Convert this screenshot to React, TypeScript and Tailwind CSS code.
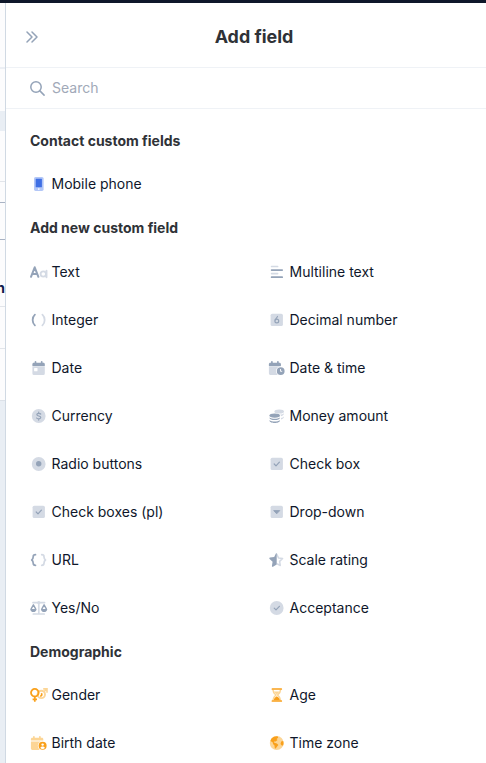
import type { ReactNode } from 'react';

const DARK = '#94a3b8';
const LIGHT = '#d4dae4';

function Icon({ children }: { children: ReactNode }) {
  return (
    <svg className="h-3.5 w-[18px] shrink-0 overflow-visible" viewBox="0 0 18 14" fill="none">
      {children}
    </svg>
  );
}

const TextIcon = () => (
  <Icon>
    <path d="M1 11.8 4.7 2.3 8.4 11.8M2.2 8.9h5" stroke={DARK} strokeWidth="2" strokeLinecap="round" strokeLinejoin="round" />
    <circle cx="13.3" cy="9" r="2.7" stroke={LIGHT} strokeWidth="1.8" />
    <path d="M16.5 5.8v6.5" stroke={LIGHT} strokeWidth="1.9" strokeLinecap="round" />
  </Icon>
);

const MultilineIcon = () => (
  <Icon>
    <g strokeWidth="1.7" strokeLinecap="round">
      <path d="M3.6 1.5h6M3.6 8.6h6" stroke={LIGHT} />
      <path d="M3.6 5.1h10.6M3.6 12.2h10.6" stroke={DARK} />
    </g>
  </Icon>
);

const IntegerIcon = () => (
  <Icon>
    <g strokeWidth="1.8" strokeLinecap="round">
      <path d="M4.9 1.6C1.9 4.3 1.9 9.7 4.9 12.4" stroke={DARK} />
      <path d="M12.4 1.6c3 2.7 3 8.1 0 10.8" stroke={LIGHT} />
    </g>
  </Icon>
);

const DecimalIcon = () => (
  <Icon>
    <rect x="2.6" y=".7" width="12.3" height="12.3" rx="1.6" fill={LIGHT} />
    <circle cx="8.8" cy="8" r="1.9" stroke={DARK} strokeWidth="1.2" />
    <path d="M9.5 3.5 7.2 6.8" stroke={DARK} strokeWidth="1.2" strokeLinecap="round" />
  </Icon>
);

const DateIcon = () => (
  <Icon>
    <path d="M2.4 5.2h12.4v7.2a1.5 1.5 0 0 1-1.5 1.5H3.9a1.5 1.5 0 0 1-1.5-1.5z" fill={LIGHT} />
    <path d="M2.4 4.9V3.2c0-.8.6-1.4 1.4-1.4h9.6c.8 0 1.4.6 1.4 1.4v1.7z" fill={DARK} />
    <path d="M5.5.8v1.6M11.7.8v1.6" stroke={DARK} strokeWidth="1.7" strokeLinecap="round" />
    <rect x="4.1" y="6.9" width="3.4" height="3.4" rx=".5" fill="#fff" />
  </Icon>
);

const DateTimeIcon = () => (
  <Icon>
    <path d="M.9 5.2h11.8v8.7H2.3a1.4 1.4 0 0 1-1.4-1.4z" fill={LIGHT} />
    <path d="M.9 4.9V3.2c0-.8.6-1.4 1.4-1.4h9.2c.8 0 1.4.6 1.4 1.4v1.7z" fill={DARK} />
    <path d="M3.9.8v1.6M9.9.8v1.6" stroke={DARK} strokeWidth="1.7" strokeLinecap="round" />
    <circle cx="12.7" cy="10.1" r="4.7" fill="#fff" />
    <circle cx="12.7" cy="10.1" r="3.9" fill={DARK} />
    <path d="M12.5 8v2.3h1.7" stroke="#fff" strokeWidth=".9" />
  </Icon>
);

const CurrencyIcon = () => (
  <Icon>
    <circle cx="8.7" cy="7" r="6.9" fill={LIGHT} />
    <path d="M10.8 5.1C10.3 4.2 6.9 3.9 6.8 5.6c0 1.8 4.1 1 4 2.9-.1 1.8-3.5 1.6-4.2.5M8.7 3.1v1.2M8.7 9.9v1.2" stroke={DARK} strokeWidth="1.15" strokeLinecap="round" />
  </Icon>
);

const MoneyIcon = () => (
  <Icon>
    <ellipse cx="11.2" cy="2.5" rx="4.8" ry="2" fill={LIGHT} />
    <path d="M12 5.8c1.7-.2 3.2-.7 4-1.5 0 1.6-.9 2.4-3 2.9zM13 9c1.3-.2 2.3-.7 3-1.4 0 1.6-.9 2.4-3 2.9z" fill={LIGHT} />
    <ellipse cx="6.7" cy="7" rx="6.1" ry="2.8" fill="#fff" />
    <ellipse cx="6.7" cy="6.6" rx="5.3" ry="2.1" fill={DARK} />
    <path d="M1.4 8.4c2.4 1.8 8.2 1.8 10.6 0 0 3.5-10.6 3.5-10.6 0M1.4 11.2c2.4 1.8 8.2 1.8 10.6 0 0 3.7-10.6 3.7-10.6 0" fill={DARK} />
  </Icon>
);

const RadioIcon = () => (
  <Icon>
    <circle cx="8.7" cy="7" r="6.9" fill={LIGHT} />
    <circle cx="8.7" cy="6.8" r="2.7" fill={DARK} />
  </Icon>
);

const CheckIcon = () => (
  <Icon>
    <rect x="2.6" y=".7" width="12.3" height="12.3" rx="1.6" fill={LIGHT} />
    <path d="m6.2 7 1.8 1.8 3.4-3.6" stroke={DARK} strokeWidth="1.2" strokeLinecap="round" strokeLinejoin="round" />
  </Icon>
);

const DropdownIcon = () => (
  <Icon>
    <rect x="2.6" y=".7" width="12.3" height="12.3" rx="1.6" fill={LIGHT} />
    <path d="M5.7 5.6h6L8.7 8.8z" fill={DARK} stroke={DARK} strokeWidth=".9" strokeLinejoin="round" />
  </Icon>
);

const UrlIcon = () => (
  <Icon>
    <g strokeWidth="1.7" strokeLinecap="round" strokeLinejoin="round">
      <path d="M5.5 1.7C3.6 1.7 3.2 2.2 3.2 3.7 3.2 5.6 3 6.2 1.7 7 3 7.8 3.2 8.4 3.2 10.3c0 1.5.4 2 2.3 2" stroke={DARK} />
      <path d="M11.7 1.7c1.9 0 2.3.5 2.3 2 0 1.9.2 2.5 1.5 3.3-1.3.8-1.5 1.4-1.5 3.3 0 1.5-.4 2-2.3 2" stroke={LIGHT} />
    </g>
  </Icon>
);

const StarIcon = () => (
  <Icon>
    <path d="m8.7 1.2 1.8 3.7 4.1.6-3 2.9.7 4.1-3.6-1.9" stroke={LIGHT} strokeWidth="1.5" strokeLinejoin="round" />
    <path d="M8.7 0v11.4L5 13.7c-.7.3-1.2-.1-1.1-.8l.7-4.1-3-2.9c-.5-.5-.3-1.2.4-1.3l4.2-.6L7.9.5C8.1.2 8.4 0 8.7 0" fill={DARK} />
  </Icon>
);

const ScaleIcon = () => (
  <Icon>
    <path d="M3 1.6h11.6M8.8 1.6v11.2M3.3 13h10.9" stroke={LIGHT} strokeWidth="1.7" strokeLinecap="round" />
    <circle cx="8.8" cy="1.7" r="1.6" fill={LIGHT} />
    <path d="m1 8.2 2.4-4.4 2.4 4.4M11.7 8.2l2.4-4.4 2.4 4.4" stroke={DARK} strokeWidth="1.4" strokeLinejoin="round" />
    <path d="M.2 8h6.4c0 4.1-6.4 4.1-6.4 0M10.9 8h6.4c0 4.1-6.4 4.1-6.4 0" fill={DARK} />
  </Icon>
);

const AcceptIcon = () => (
  <Icon>
    <circle cx="8.7" cy="7" r="6.9" fill={LIGHT} />
    <path d="m6.2 7.1 1.8 1.8 3.4-3.6" stroke={DARK} strokeWidth="1.2" strokeLinecap="round" strokeLinejoin="round" />
  </Icon>
);

const PhoneIcon = () => (
  <Icon>
    <rect x="4" y="0" width="9.6" height="13.9" rx="1.6" fill="#b3c7f7" />
    <rect x="5.7" y="1.7" width="6.2" height="8.6" rx=".4" fill="#3f6fe4" />
    <circle cx="8.8" cy="12" r=".85" fill="#fff" />
  </Icon>
);

const GenderIcon = () => (
  <Icon>
    <circle cx="11.3" cy="6.4" r="3.7" stroke="#fcd595" strokeWidth="1.9" />
    <path d="m14 3.7 2.3-2.3M13.2.9h3.8v3.8" stroke="#fcd595" strokeWidth="1.6" />
    <circle cx="4.8" cy="4.7" r="3.8" stroke="#f9a01b" strokeWidth="1.8" />
    <path d="M4.8 8.7v5M2.6 11.3h4.4M11.3 5.3c1 1.2.4 2.9-1.2 2.7" stroke="#f9a01b" strokeWidth="1.7" />
  </Icon>
);

const HourglassIcon = () => (
  <Icon>
    <path d="M4.9 1.5c0 3 1.2 4 3 5.5-1.8 1.5-3 2.5-3 5.5M12.6 1.5c0 3-1.2 4-3 5.5 1.8 1.5 3 2.5 3 5.5" stroke="#fcd595" strokeWidth="1.5" />
    <path d="M5.8 3.4h6L8.8 6.5z" fill="#fcd595" />
    <path d="M4.4 1h8.9M4.4 13h8.9" stroke="#f9a01b" strokeWidth="1.7" strokeLinecap="round" />
    <path d="M5.7 12.2c.3-1.9 1.7-3 3.1-3.9 1.4.9 2.8 2 3.1 3.9z" fill="#f9a01b" />
  </Icon>
);

const BirthIcon = () => (
  <Icon>
    <path d="M.9 4.5V3.2c0-.8.6-1.4 1.4-1.4h9.6c.8 0 1.4.6 1.4 1.4v1.3zM.9 5.4h12.4v8.5h-11A1.4 1.4 0 0 1 .9 12.5z" fill="#fcd595" />
    <path d="M3.9.8v1.6M9.9.8v1.6" stroke="#fcd595" strokeWidth="1.7" strokeLinecap="round" />
    <circle cx="12.6" cy="9.8" r="4.8" fill="#fff" />
    <circle cx="12.6" cy="9.8" r="4" fill="#f9a01b" />
    <circle cx="12.6" cy="8.6" r="1.2" fill="#fff" />
    <path d="M10.4 12c.2-2 4.2-2 4.4 0-.9 1.2-3.5 1.2-4.4 0" fill="#fff" />
  </Icon>
);

const GlobeIcon = () => (
  <Icon>
    <circle cx="8.7" cy="7" r="6.9" fill="#fcd595" />
    <path d="M3.3 2.7C5 .8 7.3 0 9.6.2l.6 1.5-1.7 1.4 1 1-1.9 1.3-1.6.1.3 1.3 2.6.6 1.5 1.5-1.7 2.2-.9 1.5-1-.4-.3-2.7-1.5-1.5-.2-1.5L2.5 5z" fill="#f9a01b" />
    <path d="M15.2 4.9c.5 1.6.5 3.2-.1 4.6l-1.3-.1-1.3-1.5.7-2.4z" fill="#f9a01b" />
  </Icon>
);

const customFields = [
  { label: 'Text', icon: <TextIcon /> },
  { label: 'Multiline text', icon: <MultilineIcon /> },
  { label: 'Integer', icon: <IntegerIcon /> },
  { label: 'Decimal number', icon: <DecimalIcon /> },
  { label: 'Date', icon: <DateIcon /> },
  { label: 'Date & time', icon: <DateTimeIcon /> },
  { label: 'Currency', icon: <CurrencyIcon /> },
  { label: 'Money amount', icon: <MoneyIcon /> },
  { label: 'Radio buttons', icon: <RadioIcon /> },
  { label: 'Check box', icon: <CheckIcon /> },
  { label: 'Check boxes (pl)', icon: <CheckIcon /> },
  { label: 'Drop-down', icon: <DropdownIcon /> },
  { label: 'URL', icon: <UrlIcon /> },
  { label: 'Scale rating', icon: <StarIcon /> },
  { label: 'Yes/No', icon: <ScaleIcon /> },
  { label: 'Acceptance', icon: <AcceptIcon /> },
];

const demographicFields = [
  { label: 'Gender', icon: <GenderIcon /> },
  { label: 'Age', icon: <HourglassIcon /> },
  { label: 'Birth date', icon: <BirthIcon /> },
  { label: 'Time zone', icon: <GlobeIcon /> },
];

function Field({ label, icon }: { label: string; icon: ReactNode }) {
  return (
    <button className="flex h-12 items-center gap-[3.5px] text-left text-[14px] whitespace-nowrap text-slate-900">
      {icon}
      <span className="pb-0.5">{label}</span>
    </button>
  );
}

function Heading({ children }: { children: ReactNode }) {
  return <h3 className="flex h-[39px] items-center text-[14px] font-bold text-[#2f3237]">{children}</h3>;
}

export default function App() {
  return (
    <div className="flex h-[763px] w-full flex-col overflow-hidden bg-white font-['Inter',sans-serif]">
      <div className="h-[3px] shrink-0 bg-[#0f172a]" />
      <div className="flex min-h-0 flex-1">
        {/* Sliver of the page behind the drawer */}
        <div className="flex w-[5px] shrink-0 flex-col overflow-hidden bg-[#e9eef4]">
          <div className="h-[66px] shrink-0 border-b-2 border-[#eceff4] bg-[#fcfcfd]" />
          <div className="h-[42px] shrink-0 bg-[#fcfcfd]" />
          <div className="h-5 shrink-0" />
          <div className="h-[51px] shrink-0 border-b border-[#e2e5ea] bg-[#fcfcfd]" />
          <div className="h-[21px] shrink-0 border-b border-[#a9b3c4] bg-[#fcfcfd]" />
          <div className="h-[37px] shrink-0 border-b border-[#a9b3c4] bg-[#fcfcfd]" />
          <div className="flex h-[67px] shrink-0 items-center justify-end border-b border-[#e2e5ea] bg-[#fcfcfd] pt-[30px] text-sm font-bold text-[#10194a]">n</div>
          <div className="h-[42px] shrink-0 border-b border-[#e2e5ea] bg-[#fcfcfd]" />
          <div className="h-[52px] shrink-0 border-b border-[#dce1e8] bg-[#fcfcfd]" />
        </div>

        <aside className="flex min-w-0 flex-1 flex-col border-l border-[#d0d9e3] bg-white">
          <header className="flex h-[65px] shrink-0 items-center border-b border-[#eff2f6] pt-[3px] pl-5">
            <button className="text-[#94a3b8]">
              <svg className="size-3" viewBox="0 0 12 12" fill="none" stroke="currentColor" strokeWidth="1.5" strokeLinecap="round" strokeLinejoin="round">
                <path d="m1 1 5 5-5 5M6 1l5 5-5 5" />
              </svg>
            </button>
            <h2 className="flex-1 pt-0.5 pr-[16px] text-center text-[17.9px] font-bold text-[#2f3237]">Add field</h2>
          </header>

          <div className="flex h-[41px] shrink-0 items-center gap-[7px] border-b border-[#eff2f6] pl-6 text-[14px] text-[#a1a9b8]">
            <svg className="size-[15px] text-[#94a3b8]" viewBox="0 0 15 15" fill="none" stroke="currentColor" strokeWidth="1.5" strokeLinecap="round">
              <circle cx="6" cy="6" r="5.2" />
              <path d="m9.9 9.9 4.2 4.2" />
            </svg>
            <span className="pb-0.5">Search</span>
          </div>

          <div className="flex flex-col pt-3 pl-6">
            <Heading>Contact custom fields</Heading>
            <Field label="Mobile phone" icon={<PhoneIcon />} />
            <Heading>Add new custom field</Heading>
            <div className="grid grid-cols-[238px_1fr] pt-px">
              {customFields.map((f) => (
                <Field key={f.label} {...f} />
              ))}
            </div>
            <Heading>Demographic</Heading>
            <div className="grid grid-cols-[238px_1fr]">
              {demographicFields.map((f) => (
                <Field key={f.label} {...f} />
              ))}
            </div>
          </div>
        </aside>
      </div>
    </div>
  );
}
